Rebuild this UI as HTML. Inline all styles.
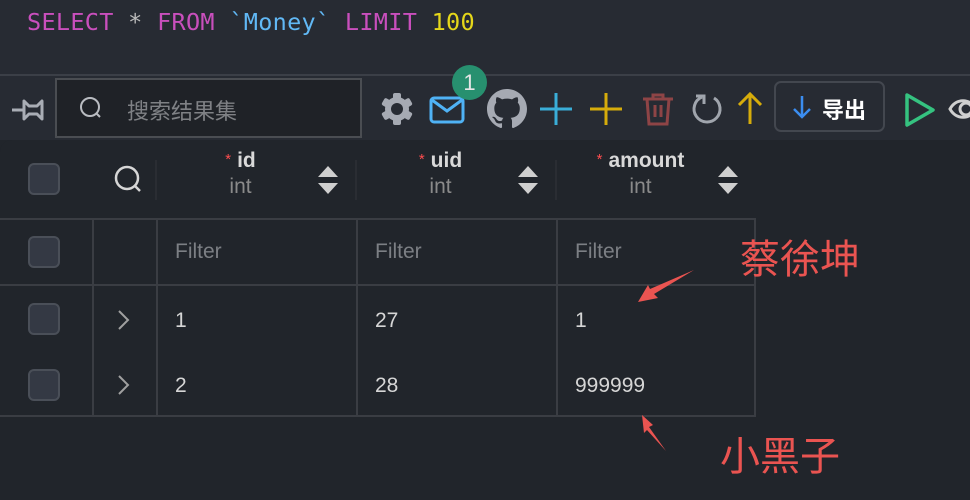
<!DOCTYPE html>
<html><head><meta charset="utf-8"><style>
*{margin:0;padding:0;box-sizing:border-box}
body{width:970px;height:500px;background:#21252b;position:relative;overflow:hidden;font-family:"Liberation Sans","Noto Sans CJK SC",sans-serif;color:#d4d4d4}
.a{position:absolute}
.code{left:27px;top:8px;font-family:"DejaVu Sans Mono","Liberation Mono",monospace;font-size:23.5px;white-space:pre;letter-spacing:0.3px}
.cb{position:absolute;width:32px;height:32px;border:2px solid #4a4f58;background:#343944;border-radius:6px}
.vl{position:absolute;width:2px;background:#3a3d43}
.hl{position:absolute;height:2px;background:#3a3d43;left:0;width:756px}
.hd{position:absolute;text-align:center;font-size:21px;line-height:26px}
.hd b{color:#d9d9d9;font-weight:bold}
.hd i{color:#ff4d4f;font-style:normal;font-size:15px;vertical-align:3px;margin-right:6px}
.hd span{color:#8a8a8a}
.t{position:absolute;font-size:21px;color:#d6d6d6}
.f{position:absolute;font-size:21px;color:#7c7f84}
.ann{position:absolute;color:#ea5451;font-size:40px;font-family:"Noto Sans CJK SC",sans-serif;line-height:1}
</style></head><body>
<div class="a" style="left:0;top:0;width:970px;height:140px;background:#272b33"></div>
<div class="a" style="left:0;top:74px;width:970px;height:2px;background:#3b3f47"></div>
<div class="a code"><span style="color:#c94fbd">SELECT</span> <span style="color:#bbb">*</span> <span style="color:#c94fbd">FROM</span> <span style="color:#61b8f5">`Money`</span> <span style="color:#c94fbd">LIMIT</span> <span style="color:#e5d71a">100</span></div>
<svg class="a" style="left:10px;top:96px" width="36" height="28" viewBox="0 0 36 28"><path d="M2 14H14" stroke="#a9adb5" stroke-width="3"/><path d="M14 5L19 10H27L32 5V23L27 18H19L14 23Z" fill="none" stroke="#a9adb5" stroke-width="3" stroke-linejoin="round"/></svg>
<div class="a" style="left:55px;top:78px;width:307px;height:60px;border:2px solid #4a4d52;background:#1f2227"></div>
<svg class="a" style="left:78px;top:95px" width="26" height="26"><circle cx="12" cy="12" r="9" fill="none" stroke="#b9bcc1" stroke-width="2"/><path d="M18 18l4 4" stroke="#b9bcc1" stroke-width="2"/></svg>
<div class="a" style="left:127px;top:94px;font-size:22px;color:#7f8185">搜索结果集</div>
<svg class="a" style="left:380px;top:92px" width="34" height="34" viewBox="0 0 34 34"><g fill="#a6aab3"><circle cx="17" cy="17" r="12"/><rect x="13" y="1" width="8" height="32" rx="2"/><rect x="13" y="1" width="8" height="32" rx="2" transform="rotate(60 17 17)"/><rect x="13" y="1" width="8" height="32" rx="2" transform="rotate(120 17 17)"/></g><circle cx="17" cy="17" r="6" fill="#272b33"/></svg>
<svg class="a" style="left:429px;top:96px" width="36" height="28"><rect x="2" y="2" width="32" height="24" rx="3" fill="none" stroke="#4fb2f5" stroke-width="3"/><path d="M3 4l15 11 15-11" fill="none" stroke="#4fb2f5" stroke-width="3"/></svg>
<div class="a" style="left:452px;top:65px;width:35px;height:35px;border-radius:50%;background:#27906f;color:#e6e6e6;font-size:22px;text-align:center;line-height:35px">1</div>
<svg class="a" style="left:487px;top:89px" width="40" height="40" viewBox="0 0 16 16"><path fill="#a6aab3" d="M8 0C3.580 0 0 3.580 0 8c0 3.540 2.290 6.530 5.470 7.590.4.070.550-.170.550-.380 0-.190-.010-.820-.010-1.490-2.010.370-2.530-.490-2.690-.940-.090-.230-.480-.940-.820-1.130-.280-.150-.680-.520-.010-.530.630-.010 1.080.580 1.230.820.720 1.210 1.870.870 2.330.660.070-.520.280-.870.510-1.070-1.780-.2-3.640-.890-3.640-3.950 0-.870.310-1.590.820-2.150-.080-.2-.360-1.020.080-2.120 0 0 .670-.210 2.200.820.640-.180 1.320-.270 2-.270.680 0 1.360.090 2 .270 1.530-1.040 2.200-.820 2.200-.820.440 1.100.160 1.920.080 2.120.510.560.820 1.270.820 2.150 0 3.070-1.870 3.750-3.650 3.950.290.250.540.730.540 1.480 0 1.070-.010 1.930-.010 2.200 0 .210.150.460.550.380A8.013 8.013 0 0016 8c0-4.420-3.580-8-8-8z"/></svg>
<svg class="a" style="left:538px;top:91px" width="36" height="36"><path d="M18 2v32M2 18h32" stroke="#3aaed8" stroke-width="3"/></svg>
<svg class="a" style="left:588px;top:91px" width="36" height="36"><path d="M18 2v32M2 18h32" stroke="#d6ac0b" stroke-width="3"/></svg>
<svg class="a" style="left:640px;top:91px" width="36" height="36"><path d="M3 8h30M13 8V4h10v4M7 8l2 25h18l2-25M15 14v12M21 14v12" fill="none" stroke="#8e4446" stroke-width="3"/></svg>
<svg class="a" style="left:690px;top:91px" width="34" height="36"><path d="M12 6A13 13 0 1 0 24 7" fill="none" stroke="#a0a5ad" stroke-width="3"/><path d="M6 5h8v8" fill="none" stroke="#a0a5ad" stroke-width="3"/></svg>
<svg class="a" style="left:736px;top:92px" width="28" height="32"><path d="M14 2v30M3 13L14 2l11 11" fill="none" stroke="#d6ac0b" stroke-width="3"/></svg>
<div class="a" style="left:774px;top:81px;width:111px;height:51px;border:2px solid #43474f;border-radius:7px"></div>
<svg class="a" style="left:791px;top:95px" width="22" height="24"><path d="M11 1v21M3 14l8 8 8-8" fill="none" stroke="#3b8df0" stroke-width="2.5"/></svg>
<div class="a" style="left:822px;top:93px;font-size:22px;color:#fff;font-weight:bold">导出</div>
<svg class="a" style="left:904px;top:92px" width="32" height="36"><path d="M3 3L29 18 3 33Z" fill="none" stroke="#35c280" stroke-width="3.5" stroke-linejoin="round"/></svg>
<svg class="a" style="left:948px;top:92px" width="30" height="34"><path d="M2 17C8 6 22 6 28 17 22 28 8 28 2 17Z" fill="none" stroke="#cfcfcf" stroke-width="3"/><circle cx="18" cy="17" r="6" fill="none" stroke="#cfcfcf" stroke-width="3"/></svg>

<div class="a" style="left:0;top:140px;width:970px;height:360px;background:#21252b;border-top-left-radius:12px"></div>
<div class="cb" style="left:28px;top:163px"></div>
<svg class="a" style="left:112px;top:164px" width="32" height="32"><circle cx="15" cy="14" r="11" fill="none" stroke="#d6d6d6" stroke-width="2.5"/><path d="M23 22l5 5" stroke="#d6d6d6" stroke-width="2.5"/></svg>
<div class="hd" style="left:157px;top:147px;width:167px"><i>*</i><b>id</b><br><span>int</span></div>
<div class="hd" style="left:357px;top:147px;width:167px"><i>*</i><b>uid</b><br><span>int</span></div>
<div class="hd" style="left:557px;top:147px;width:167px"><i>*</i><b>amount</b><br><span>int</span></div>
<svg class="a" style="left:316px;top:163px" width="26" height="34"><path d="M2 14L12 3 22 14ZM2 20l10 11 10-11Z" fill="#cfcfcf"/></svg>
<svg class="a" style="left:516px;top:163px" width="26" height="34"><path d="M2 14L12 3 22 14ZM2 20l10 11 10-11Z" fill="#cfcfcf"/></svg>
<svg class="a" style="left:716px;top:163px" width="26" height="34"><path d="M2 14L12 3 22 14ZM2 20l10 11 10-11Z" fill="#cfcfcf"/></svg>
<div class="vl" style="left:155px;top:160px;height:40px;background:#2a2d33"></div>
<div class="vl" style="left:355px;top:160px;height:40px;background:#2a2d33"></div>
<div class="vl" style="left:555px;top:160px;height:40px;background:#2a2d33"></div>

<div class="hl" style="top:218px"></div>
<div class="hl" style="top:284px"></div>
<div class="hl" style="top:415px"></div>
<div class="vl" style="left:92px;top:220px;height:196px"></div>
<div class="vl" style="left:156px;top:220px;height:196px"></div>
<div class="vl" style="left:356px;top:220px;height:196px"></div>
<div class="vl" style="left:556px;top:220px;height:196px"></div>
<div class="vl" style="left:754px;top:220px;height:196px"></div>

<div class="cb" style="left:28px;top:236px"></div>
<div class="cb" style="left:28px;top:303px"></div>
<div class="cb" style="left:28px;top:369px"></div>
<div class="f" style="left:175px;top:240px">Filter</div>
<div class="f" style="left:375px;top:240px">Filter</div>
<div class="f" style="left:575px;top:240px">Filter</div>
<svg class="a" style="left:117px;top:309px" width="14" height="22"><path d="M2 2l9 9-9 9" fill="none" stroke="#a0a0a0" stroke-width="2"/></svg>
<svg class="a" style="left:117px;top:374px" width="14" height="22"><path d="M2 2l9 9-9 9" fill="none" stroke="#a0a0a0" stroke-width="2"/></svg>
<div class="t" style="left:175px;top:309px">1</div>
<div class="t" style="left:375px;top:309px">27</div>
<div class="t" style="left:575px;top:309px">1</div>
<div class="t" style="left:175px;top:374px">2</div>
<div class="t" style="left:375px;top:374px">28</div>
<div class="t" style="left:575px;top:374px">999999</div>

<div class="ann" style="left:740px;top:236px">蔡徐坤</div>
<div class="ann" style="left:720px;top:433px">小黑子</div>
<svg class="a" style="left:630px;top:265px" width="80" height="40"><path d="M64 5L20 24l-2-4-10 17 20-4-4-4Z" fill="#ea5451"/></svg>
<svg class="a" style="left:635px;top:410px" width="40" height="45"><path d="M31 41L14 17l4-2L7 5l2 18 3-3Z" fill="#ea5451"/></svg>
</body></html>
